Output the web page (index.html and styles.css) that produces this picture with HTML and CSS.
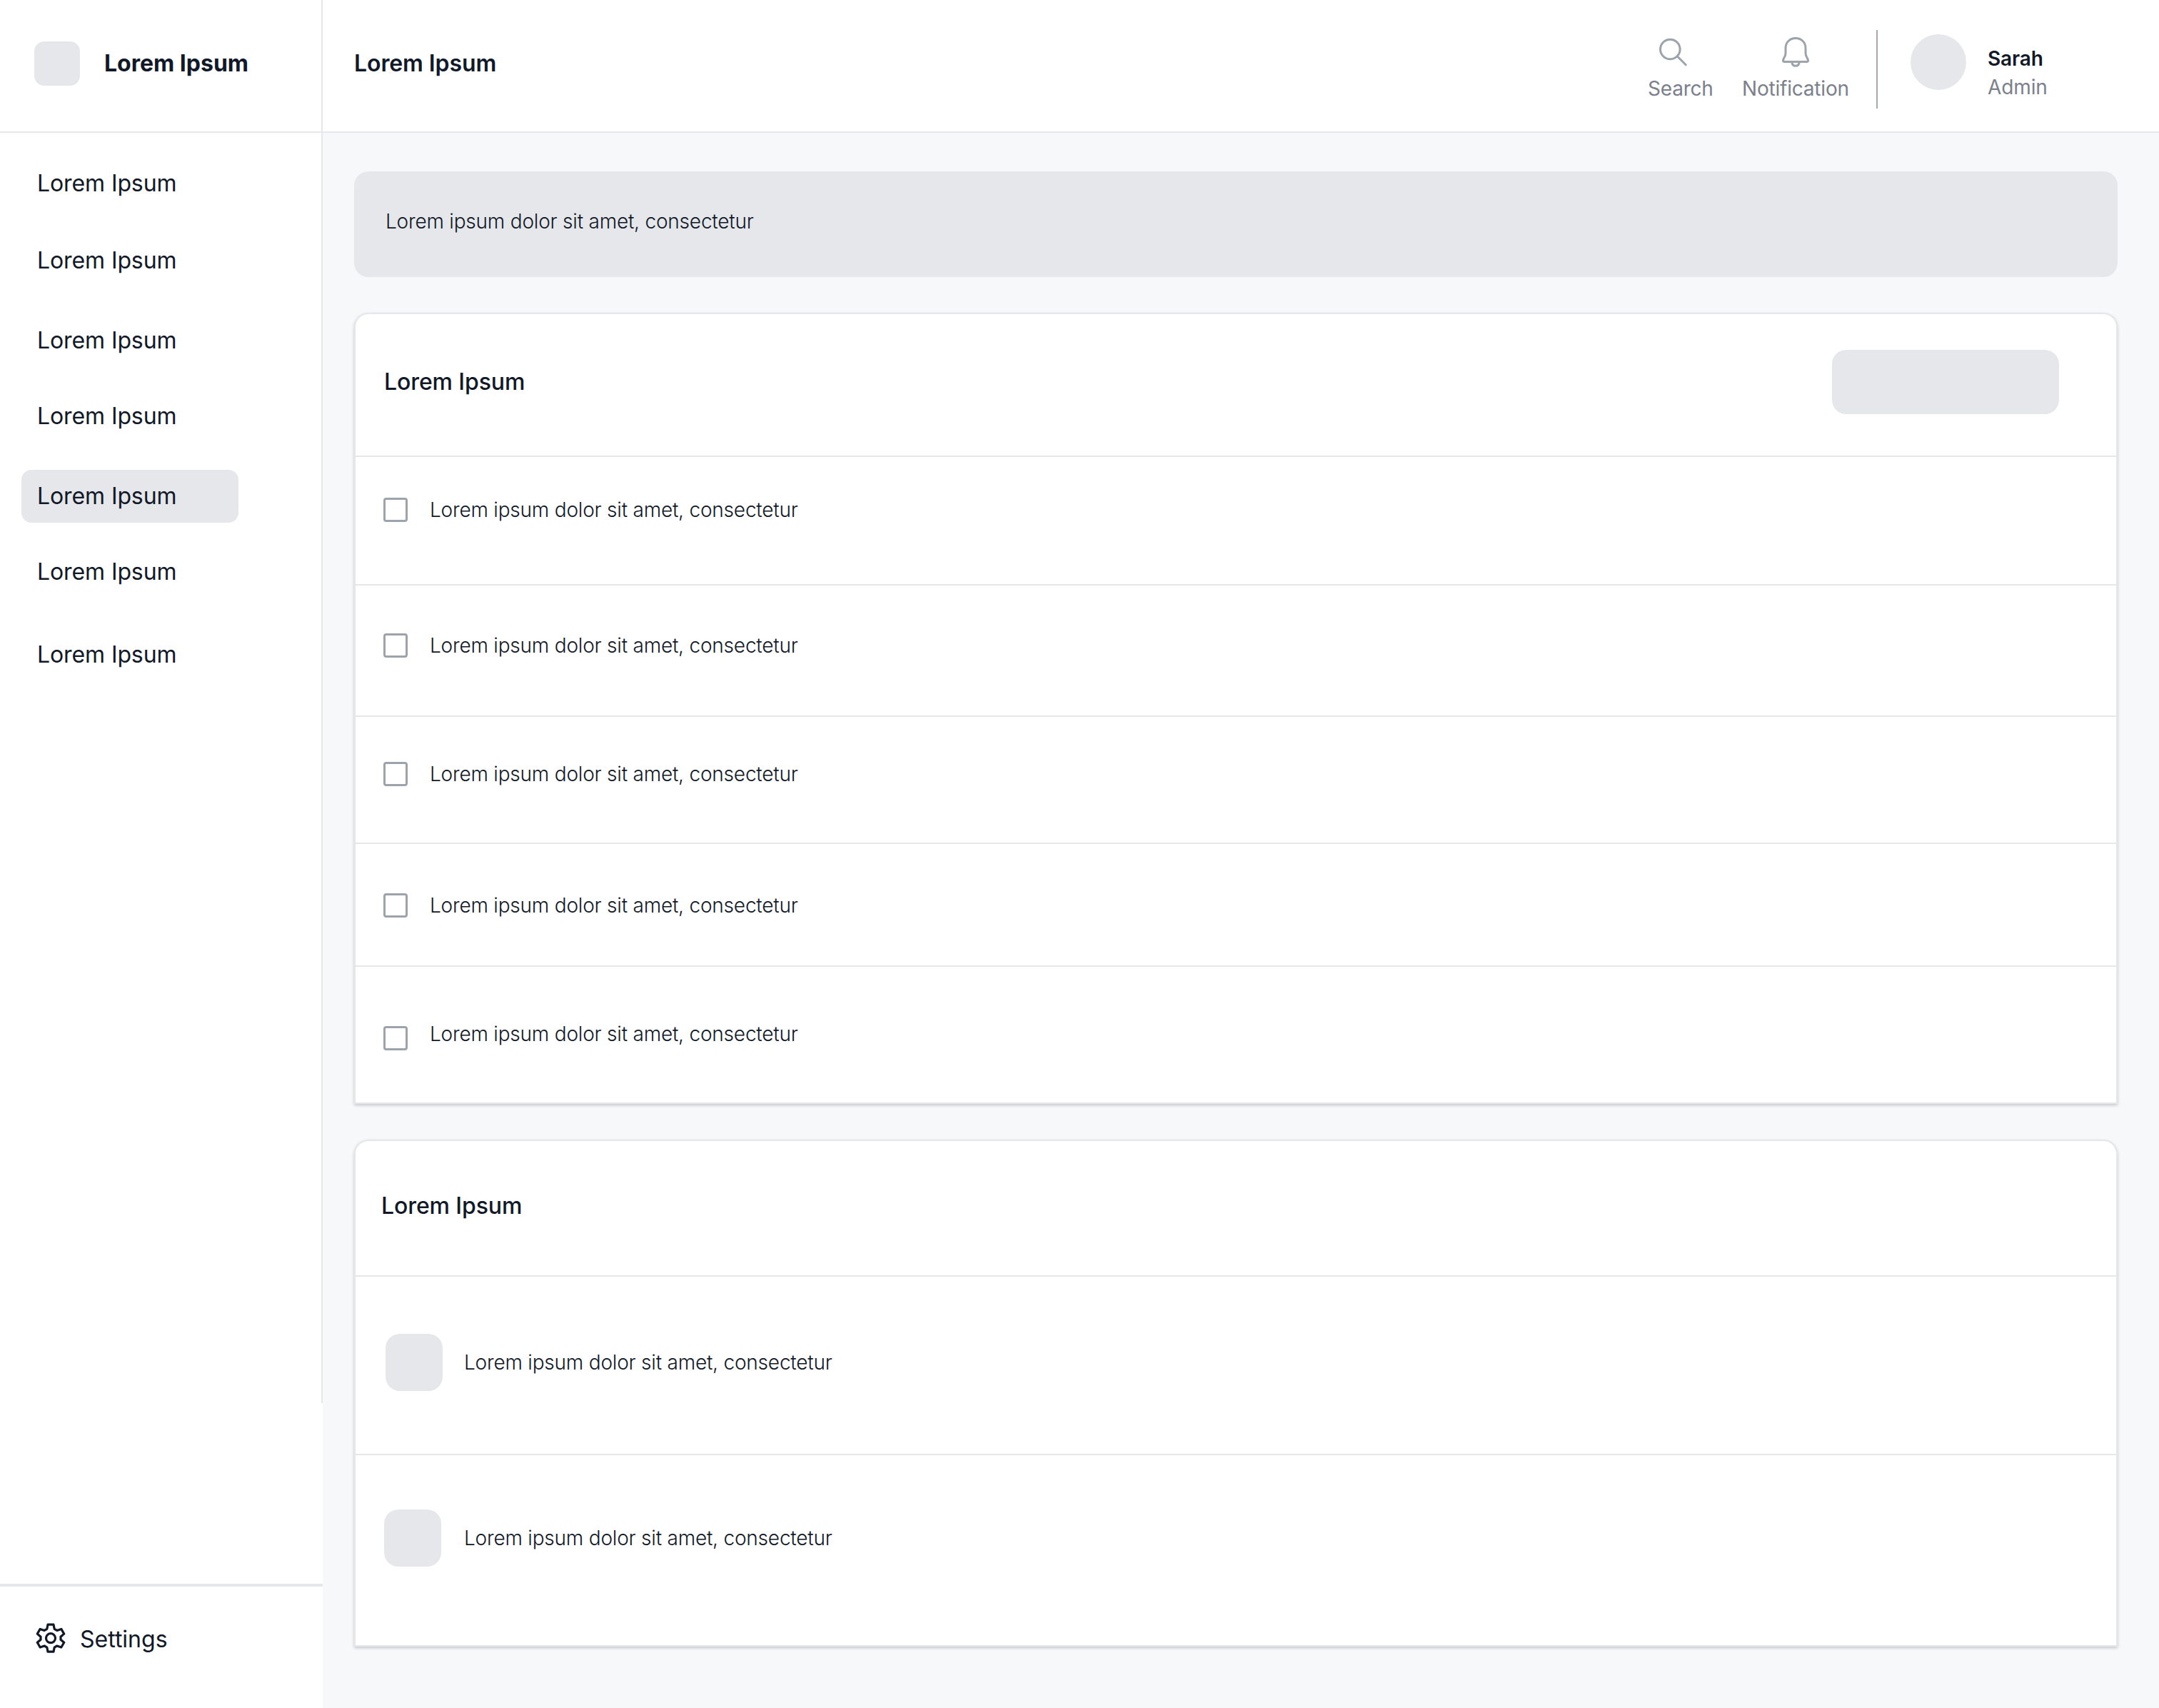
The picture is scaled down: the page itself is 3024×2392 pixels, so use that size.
FILE: index.html
```html
<!DOCTYPE html>
<html lang="en">
<head>
<meta charset="utf-8">
<title>Lorem Ipsum</title>
<link rel="stylesheet" href="styles.css">
</head>
<body>
<div class="app">
  <header class="topbar">
    <div class="brand">
      <span class="brand-logo"></span>
      <span class="brand-name">Lorem Ipsum</span>
    </div>
    <div class="topbar-main">
      <h1 class="page-title">Lorem Ipsum</h1>
      <div class="actions">
        <a class="action action-search">
          <svg class="action-icon" width="44" height="48" viewBox="0 0 44 48"><circle cx="17.3" cy="23" r="13.8"/><path d="M27.2 32.8 39.2 44.8"/></svg>
          <span>Search</span>
        </a>
        <a class="action action-bell">
          <svg class="action-icon" width="44" height="48" viewBox="0 0 44 48"><path d="M22 7.5c-8.2 0-14 6-14 13.7v7.3c0 2.400-.7 4.200-2 6.300-1 1.700-1.500 2.700-1.500 3.900 0 1.200.8 1.800 2 1.800h31c1.200 0 2-.6 2-1.800 0-1.200-.5-2.200-1.500-3.900-1.300-2.100-2-3.900-2-6.300v-7.300c0-7.700-5.800-13.700-14-13.700Z"/><path d="M16.800 41c.3 3.500 2.300 5.300 5.200 5.300s4.900-1.800 5.200-5.300"/></svg>
          <span>Notification</span>
        </a>
      </div>
      <div class="profile">
        <span class="avatar"></span>
        <div class="profile-text">
          <span class="profile-name">Sarah</span>
          <span class="profile-role">Admin</span>
        </div>
      </div>
    </div>
  </header>

  <aside class="sidebar">
    <nav class="nav">
      <a class="nav-item">Lorem Ipsum</a>
      <a class="nav-item">Lorem Ipsum</a>
      <a class="nav-item">Lorem Ipsum</a>
      <a class="nav-item">Lorem Ipsum</a>
      <a class="nav-item nav-item-active">Lorem Ipsum</a>
      <a class="nav-item">Lorem Ipsum</a>
      <a class="nav-item">Lorem Ipsum</a>
    </nav>
    <div class="settings">
      <svg class="settings-icon" width="42" height="44" viewBox="0 0 42 44"><path d="M17 3.200h8l1.200 6.100 3.600 2.100 6-2 3.900 6.700-4.700 4.100v4l4.700 4.100-3.900 6.700-6-2-3.600 2.100-1.200 6.100h-8l-1.200-6.100-3.600-2.100-6 2-3.900-6.700 4.700-4.100v-4l-4.700-4.100 3.900-6.700 6 2 3.600-2.100Z"/><circle cx="21" cy="22.200" r="6.500"/></svg>
      <span>Settings</span>
    </div>
  </aside>

  <main class="content">
    <div class="banner">Lorem ipsum dolor sit amet, consectetur</div>

    <section class="card card-tasks">
      <div class="card-head">
        <h2 class="card-title">Lorem Ipsum</h2>
        <span class="card-button"></span>
      </div>
      <div class="row"><span class="checkbox"></span><span class="row-text">Lorem ipsum dolor sit amet, consectetur</span></div>
      <div class="row"><span class="checkbox"></span><span class="row-text">Lorem ipsum dolor sit amet, consectetur</span></div>
      <div class="row"><span class="checkbox"></span><span class="row-text">Lorem ipsum dolor sit amet, consectetur</span></div>
      <div class="row"><span class="checkbox"></span><span class="row-text">Lorem ipsum dolor sit amet, consectetur</span></div>
      <div class="row"><span class="checkbox"></span><span class="row-text">Lorem ipsum dolor sit amet, consectetur</span></div>
    </section>

    <section class="card card-media">
      <div class="card-head"><h2 class="card-title">Lorem Ipsum</h2></div>
      <div class="row"><span class="thumb"></span><span class="row-text">Lorem ipsum dolor sit amet, consectetur</span></div>
      <div class="row"><span class="thumb"></span><span class="row-text">Lorem ipsum dolor sit amet, consectetur</span></div>
    </section>
  </main>
</div>
</body>
</html>
```
FILE: styles.css
```css
:root {
  --ink: #111827;
  --muted: #7b808c;
  --icon: #9ca3ab;
  --fill: #e5e7eb;
  --line: #e5e7eb;
  --canvas: #f7f8fa;
}

* { box-sizing: border-box; }

body {
  margin: 0;
  background: var(--canvas);
  color: var(--ink);
  font-family: Inter, "Liberation Sans", sans-serif;
  font-size: 32px;
  line-height: 40px;
}

h1, h2 { margin: 0; font-size: 32px; }

.app {
  display: grid;
  grid-template-columns: 452px 1fr;
  grid-template-rows: 186px 1fr;
  width: 3024px;
  height: 2392px;
}

.topbar {
  grid-column: 1 / -1;
  display: flex;
  background: #fff;
  border-bottom: 2px solid var(--line);
}

.brand {
  display: flex;
  align-items: flex-start;
  width: 452px;
  padding: 58px 0 0 48px;
  border-right: 2px solid var(--line);
}

.brand-logo {
  width: 64px;
  height: 62px;
  border-radius: 14px;
  background: var(--fill);
}

.brand-name { margin: 11px 0 0 34px; font-weight: 700; }

.topbar-main {
  flex: 1;
  display: flex;
  align-items: flex-start;
  padding-left: 44px;
}

.page-title { margin-top: 69px; font-weight: 600; letter-spacing: -0.1px; }

.actions {
  display: flex;
  align-items: flex-start;
  gap: 44px;
  margin-left: auto;
  padding-top: 46px;
}

.action {
  display: flex;
  flex-direction: column;
  color: var(--muted);
  font-size: 28px;
  line-height: 36px;
  letter-spacing: -0.2px;
}

.action span { margin-top: 12px; }
.action-search { width: 88px; }
.action-bell { width: 147px; }
.action-icon { fill: none; stroke: var(--icon); stroke-width: 3; stroke-linecap: round; stroke-linejoin: round; }
.action-search .action-icon { margin-left: 14px; }
.action-bell .action-icon { margin-left: 53px; }

.profile {
  display: flex;
  width: 396px;
  height: 110px;
  margin: 42px 0 0 41px;
  padding: 6px 0 0 46px;
  border-left: 2px solid #a3a9b2;
}

.avatar { width: 78px; height: 78px; border-radius: 50%; background: var(--fill); }

.profile-text {
  display: flex;
  flex-direction: column;
  margin: 14px 0 0 30px;
  font-size: 28px;
  line-height: 40px;
  letter-spacing: -0.1px;
}

.profile-name { font-weight: 600; }
.profile-role { color: var(--muted); }

.sidebar {
  display: flex;
  flex-direction: column;
  justify-content: space-between;
  background: linear-gradient(var(--line), var(--line)) right top / 2px 1779px no-repeat #fff;
}

.nav {
  display: flex;
  flex-direction: column;
  align-items: flex-start;
  padding: 34px 0 0 30px;
}

.nav-item {
  width: 304px;
  height: 74px;
  padding: 17px 0 0 22px;
  border-radius: 14px;
  margin-bottom: 34px;
  letter-spacing: -0.1px;
}

.nav-item:nth-child(2), .nav-item:nth-child(4) { margin-bottom: 38px; }
.nav-item:nth-child(3), .nav-item:nth-child(5) { margin-bottom: 32px; }
.nav-item:nth-child(6) { margin-bottom: 42px; }
.nav-item-active { background: var(--fill); }

.settings {
  display: flex;
  align-items: flex-start;
  height: 174px;
  padding: 50px 0 0 50px;
  border-top: 4px solid var(--line);
}

.settings span { margin: 4px 0 0 20px; }
.settings-icon { fill: none; stroke: var(--ink); stroke-width: 3.2; stroke-linejoin: round; }

.content { padding: 54px 58px 0 44px; }

.banner {
  height: 148px;
  padding: 52px 44px;
  border-radius: 20px;
  background: var(--fill);
  font-size: 28px;
  font-weight: 300;
  line-height: 36px;
  letter-spacing: -0.2px;
}

.card {
  margin-top: 50px;
  border: 2px solid var(--line);
  border-radius: 20px 20px 0 0;
  background: #fff;
  box-shadow: 0 2px 4px rgba(0, 0, 0, 0.2);
}

.card-head {
  display: flex;
  justify-content: space-between;
  align-items: flex-start;
  height: 200px;
  padding: 50px 80px 0 40px;
  border-bottom: 2px solid var(--line);
}

.card-title { margin-top: 25px; font-weight: 500; letter-spacing: -0.1px; }
.card-button { width: 318px; height: 90px; border-radius: 20px; background: var(--fill); }
.card-media .card-head { height: 190px; padding: 46px 0 0 36px; }

.row {
  display: flex;
  align-items: flex-start;
  border-bottom: 2px solid var(--line);
  font-size: 28px;
  font-weight: 300;
  line-height: 36px;
  letter-spacing: -0.2px;
}

.row:last-child { border-bottom: 0; }

.checkbox {
  width: 34px;
  height: 34px;
  margin-right: 31px;
  border: 3px solid var(--icon);
  border-radius: 4px;
}

.checkbox + .row-text { margin-top: -1px; }

.card-tasks .row { height: 180px; padding: 57px 0 0 39px; }
.card-tasks .row:nth-child(3) { height: 184px; padding-top: 67px; }
.card-tasks .row:nth-child(4) { height: 178px; padding-top: 63px; }
.card-tasks .row:nth-child(5) { height: 172px; padding-top: 69px; }
.card-tasks .row:nth-child(6) { height: 190px; padding-top: 77px; }
.card-tasks .row:nth-child(6) .checkbox { margin-top: 6px; }

.thumb { width: 80px; height: 80px; border-radius: 20px; background: var(--fill); }
.thumb + .row-text { margin: 22px 0 0 30px; }
.card-media .row { height: 250px; padding: 80px 0 0 42px; }
.card-media .row:last-child { height: 266px; padding: 76px 0 0 40px; }
.card-media .row:last-child .row-text { margin-left: 32px; }
```
